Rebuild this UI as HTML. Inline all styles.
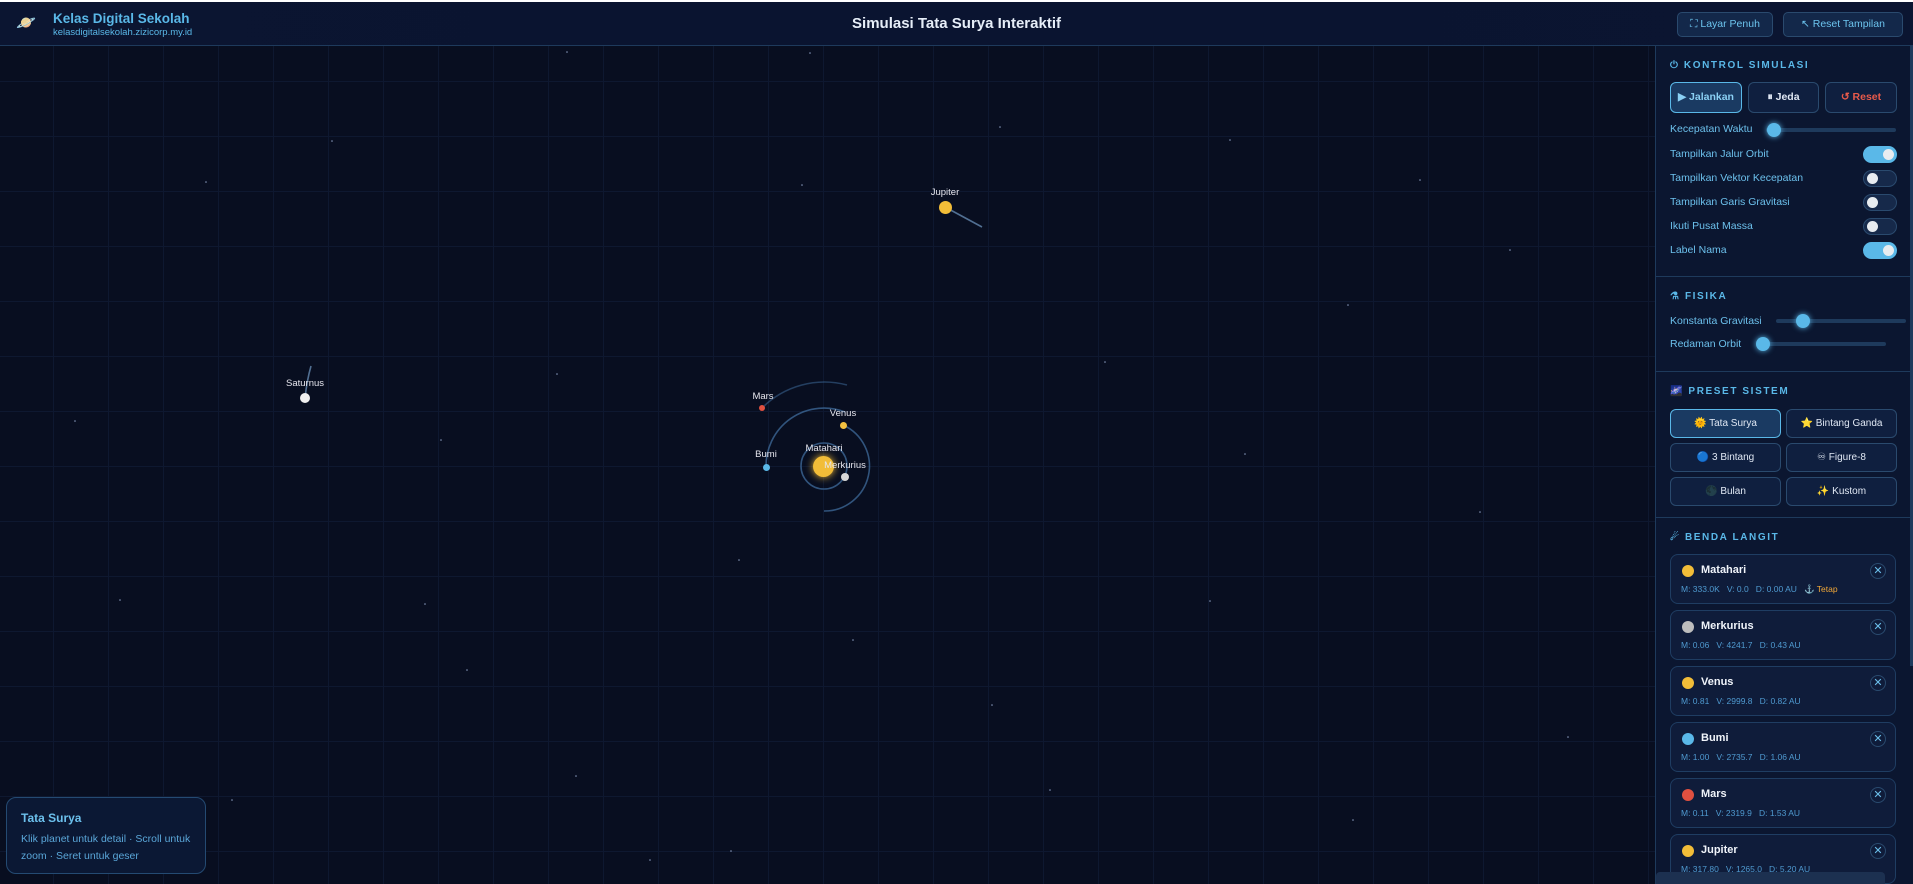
<!DOCTYPE html>
<html><head><meta charset="utf-8"><style>
*{box-sizing:border-box;margin:0;padding:0}
body{width:1913px;height:884px;overflow:hidden;background:#080e20;font-family:"Liberation Sans",sans-serif;position:relative}
.canvas{position:absolute;left:0;top:0;width:1655px;height:884px;background-color:#080e20;background-image:linear-gradient(#0e1830 1px,transparent 1px),linear-gradient(90deg,#0e1830 1px,transparent 1px);background-size:55px 55px;background-position:53px 26px}
.hdr{position:absolute;left:0;top:0;width:1913px;height:46px;background:linear-gradient(90deg,#0b1531,#0a1430 50%,#0b1531);border-bottom:1px solid #1e3a5c;border-top:2px solid #fff}
.hdr .t1{position:absolute;left:53px;top:9px;color:#5ab8e8;font-weight:bold;font-size:13.5px}
.hdr .t2{position:absolute;left:53px;top:25px;color:#5ab8e8;font-size:9.5px}
.hdr .c{position:absolute;left:0;width:1913px;top:13px;text-align:center;color:#e6eef8;font-weight:bold;font-size:15px}
.hb{position:absolute;top:10px;height:25px;border:1px solid #2a4a6e;background:#13284a;border-radius:5px;color:#6cc4ee;font-size:10.5px;line-height:23px;text-align:center}
.side{position:absolute;left:1655px;top:46px;width:258px;height:838px;background:#0b1630;border-left:1px solid #1e3a5c}
.sec{position:absolute;left:14px;color:#5ab8e8;font-size:10px;font-weight:bold;letter-spacing:1.6px}
.div{position:absolute;left:0;width:258px;height:1px;background:#1e3a5c}
.btn{position:absolute;height:31px;border:1px solid #2a4a6e;border-radius:6px;background:#0f1f3f;color:#e0e8f4;font-size:10.5px;font-weight:bold;text-align:center;line-height:29px}
.lbl{position:absolute;left:14px;color:#6cc0ec;font-size:10.5px}
.tg{position:absolute;left:207px;width:34px;height:17px;border-radius:9px;background:#16294a;border:1px solid #2a4a6e}
.tg i{position:absolute;top:2px;left:3px;width:11px;height:11px;border-radius:50%;background:#e8ecf0}
.tg.on{background:#5ab8e8;border-color:#5ab8e8}.tg.on i{left:19px}
.trk{position:absolute;height:4px;background:#1e3a5c;border-radius:2px}
.knob{position:absolute;width:14px;height:14px;border-radius:50%;background:#5ab8e8;box-shadow:0 0 6px #5ab8e8}
.pb{position:absolute;width:111px;height:29px;border:1px solid #2a4a6e;border-radius:6px;background:#0f1f3f;color:#e0e8f4;font-size:10px;text-align:center;line-height:27px}
.card{position:absolute;left:14px;width:226px;height:50px;border:1px solid #1f3d62;border-radius:8px;background:#0f1c3a}
.card .d{position:absolute;left:11px;top:10px;width:12px;height:12px;border-radius:50%}
.card .n{position:absolute;left:30px;top:9px;color:#f0f4fa;font-size:11px;font-weight:bold}
.card .s{position:absolute;left:10px;top:29px;color:#4f9ad0;font-size:8.5px;word-spacing:0}
.card .x{position:absolute;right:9px;top:8px;width:16px;height:16px;border:1px solid #2a4a6e;border-radius:50%;color:#6cc0ec;font-size:11px;line-height:14px;text-align:center}
.pl{position:absolute;color:#e6e6ee;font-size:9.5px;transform:translateX(-50%)}
.dot{position:absolute;border-radius:50%}
</style></head><body>
<div class="canvas"></div>
<svg style="position:absolute;left:0;top:0" width="1655" height="884">
<g fill="#8899bb">
<circle cx="206" cy="182" r="0.8"/><circle cx="332" cy="141" r="0.8"/><circle cx="567" cy="52" r="0.8"/><circle cx="810" cy="53" r="0.8"/><circle cx="802" cy="185" r="0.8"/><circle cx="1000" cy="127" r="0.8"/><circle cx="1230" cy="140" r="0.8"/><circle cx="1105" cy="362" r="0.8"/><circle cx="557" cy="374" r="0.8"/><circle cx="441" cy="440" r="0.8"/><circle cx="739" cy="560" r="0.8"/><circle cx="425" cy="604" r="0.8"/><circle cx="467" cy="670" r="0.8"/><circle cx="576" cy="776" r="0.8"/><circle cx="853" cy="640" r="0.8"/><circle cx="992" cy="705" r="0.8"/><circle cx="1210" cy="601" r="0.8"/><circle cx="1245" cy="454" r="0.8"/><circle cx="1480" cy="512" r="0.8"/><circle cx="1568" cy="737" r="0.8"/><circle cx="1353" cy="820" r="0.8"/><circle cx="731" cy="851" r="0.8"/><circle cx="120" cy="600" r="0.8"/><circle cx="75" cy="421" r="0.8"/><circle cx="1510" cy="250" r="0.8"/><circle cx="1348" cy="305" r="0.8"/><circle cx="232" cy="800" r="0.8"/><circle cx="1050" cy="790" r="0.8"/><circle cx="650" cy="860" r="0.8"/><circle cx="1420" cy="180" r="0.8"/>
</g>
<g fill="none" stroke="#3f6c9c" stroke-width="1.6" opacity="0.75">
<circle cx="824" cy="466" r="23"/>
<path d="M843 425 A45 45 0 0 1 824 511"/>
<path d="M766 467 A58 58 0 0 1 845 412"/>
<path d="M762 408 A88 88 0 0 1 847 385" opacity="0.7"/>
<path d="M945 207 L982 227" stroke="#6a90b8"/>
<path d="M305 398 Q307 380 311 366" stroke="#6a90b8"/>
</g>
</svg>
<div class="dot" style="left:813px;top:456px;width:21px;height:21px;background:#f2bd38;box-shadow:0 0 8px #f2bd38"></div>
<div class="dot" style="left:841px;top:473px;width:8px;height:8px;background:#d8d8d8"></div>
<div class="dot" style="left:840px;top:422px;width:7px;height:7px;background:#f2c040"></div>
<div class="dot" style="left:763px;top:464px;width:7px;height:7px;background:#5ab8e8"></div>
<div class="dot" style="left:759px;top:405px;width:6px;height:6px;background:#e05040"></div>
<div class="dot" style="left:939px;top:201px;width:13px;height:13px;background:#f2bd38"></div>
<div class="dot" style="left:300px;top:393px;width:10px;height:10px;background:#f0f0f0"></div>
<div class="pl" style="left:824px;top:443px">Matahari</div>
<div class="pl" style="left:845px;top:460px">Merkurius</div>
<div class="pl" style="left:843px;top:408px">Venus</div>
<div class="pl" style="left:766px;top:449px">Bumi</div>
<div class="pl" style="left:763px;top:391px">Mars</div>
<div class="pl" style="left:945px;top:187px">Jupiter</div>
<div class="pl" style="left:305px;top:378px">Saturnus</div>
<div style="position:absolute;left:6px;top:797px;width:200px;height:77px;border:1px solid #244a72;border-radius:10px;background:#0b1834">
<div style="position:absolute;left:14px;top:13px;color:#6cc0ec;font-weight:bold;font-size:12px">Tata Surya</div>
<div style="position:absolute;left:14px;top:33px;color:#5aa6d8;font-size:10.5px;line-height:17px;width:170px">Klik planet untuk detail · Scroll untuk zoom · Seret untuk geser</div></div>
<div class="hdr">
<div style="position:absolute;left:16px;top:13px;font-size:16px;line-height:18px">🪐</div>
<div class="t1">Kelas Digital Sekolah</div><div class="t2">kelasdigitalsekolah.zizicorp.my.id</div>
<div class="c">Simulasi Tata Surya Interaktif</div>
<div class="hb" style="left:1677px;width:96px">⛶ Layar Penuh</div>
<div class="hb" style="left:1783px;width:120px">↖ Reset Tampilan</div>
</div>
<div class="side">
<div class="sec" style="top:14px">⏻ KONTROL SIMULASI</div>
<div class="btn" style="left:14px;top:36px;width:72px;background:#1a3a62;border-color:#5ab8e8;color:#8ad0f4">▶ Jalankan</div>
<div class="btn" style="left:92px;top:36px;width:71px">⏸ Jeda</div>
<div class="btn" style="left:169px;top:36px;width:72px;color:#e85a4a">↺ Reset</div>
<div class="lbl" style="top:77px">Kecepatan Waktu</div>
<div class="trk" style="left:110px;top:82px;width:130px"></div><div class="knob" style="left:111px;top:77px"></div>
<div class="lbl" style="top:102px">Tampilkan Jalur Orbit</div><div class="tg on" style="top:100px"><i></i></div>
<div class="lbl" style="top:126px">Tampilkan Vektor Kecepatan</div><div class="tg" style="top:124px"><i></i></div>
<div class="lbl" style="top:150px">Tampilkan Garis Gravitasi</div><div class="tg" style="top:148px"><i></i></div>
<div class="lbl" style="top:174px">Ikuti Pusat Massa</div><div class="tg" style="top:172px"><i></i></div>
<div class="lbl" style="top:198px">Label Nama</div><div class="tg on" style="top:196px"><i></i></div>
<div class="div" style="top:230px"></div>
<div class="sec" style="top:245px">⚗ FISIKA</div>
<div class="lbl" style="top:269px">Konstanta Gravitasi</div>
<div class="trk" style="left:120px;top:273px;width:130px"></div><div class="knob" style="left:140px;top:268px"></div>
<div class="lbl" style="top:292px">Redaman Orbit</div>
<div class="trk" style="left:100px;top:296px;width:130px"></div><div class="knob" style="left:100px;top:291px"></div>
<div class="div" style="top:325px"></div>
<div class="sec" style="top:340px">🌌 PRESET SISTEM</div>
<div class="pb" style="left:14px;top:363px;background:#1a3a62;border-color:#5ab8e8">🌞 Tata Surya</div>
<div class="pb" style="left:130px;top:363px">⭐ Bintang Ganda</div>
<div class="pb" style="left:14px;top:397px">🔵 3 Bintang</div>
<div class="pb" style="left:130px;top:397px">♾ Figure-8</div>
<div class="pb" style="left:14px;top:431px">🌑 Bulan</div>
<div class="pb" style="left:130px;top:431px">✨ Kustom</div>
<div class="div" style="top:471px"></div>
<div class="sec" style="top:486px">☄ BENDA LANGIT</div>
<div class="card" style="top:508px"><div class="d" style="background:#f2bd38"></div><div class="n">Matahari</div><div class="s">M: 333.0K &nbsp;&nbsp;V: 0.0 &nbsp;&nbsp;D: 0.00 AU &nbsp;&nbsp;<span style="color:#f2a838">⚓ Tetap</span></div><div class="x">✕</div></div>
<div class="card" style="top:564px"><div class="d" style="background:#bdbdbd"></div><div class="n">Merkurius</div><div class="s">M: 0.06 &nbsp;&nbsp;V: 4241.7 &nbsp;&nbsp;D: 0.43 AU</div><div class="x">✕</div></div>
<div class="card" style="top:620px"><div class="d" style="background:#f2bd38"></div><div class="n">Venus</div><div class="s">M: 0.81 &nbsp;&nbsp;V: 2999.8 &nbsp;&nbsp;D: 0.82 AU</div><div class="x">✕</div></div>
<div class="card" style="top:676px"><div class="d" style="background:#5ab8e8"></div><div class="n">Bumi</div><div class="s">M: 1.00 &nbsp;&nbsp;V: 2735.7 &nbsp;&nbsp;D: 1.06 AU</div><div class="x">✕</div></div>
<div class="card" style="top:732px"><div class="d" style="background:#e05040"></div><div class="n">Mars</div><div class="s">M: 0.11 &nbsp;&nbsp;V: 2319.9 &nbsp;&nbsp;D: 1.53 AU</div><div class="x">✕</div></div>
<div class="card" style="top:788px"><div class="d" style="background:#f2bd38"></div><div class="n">Jupiter</div><div class="s">M: 317.80 &nbsp;&nbsp;V: 1265.0 &nbsp;&nbsp;D: 5.20 AU</div><div class="x">✕</div></div>
<div style="position:absolute;left:0;top:826px;width:229px;height:12px;background:#1c3050;border-radius:4px 4px 0 0"></div>
<div style="position:absolute;left:254px;top:0;width:3px;height:620px;background:#1e3a5c"></div>
</div>
</body></html>
